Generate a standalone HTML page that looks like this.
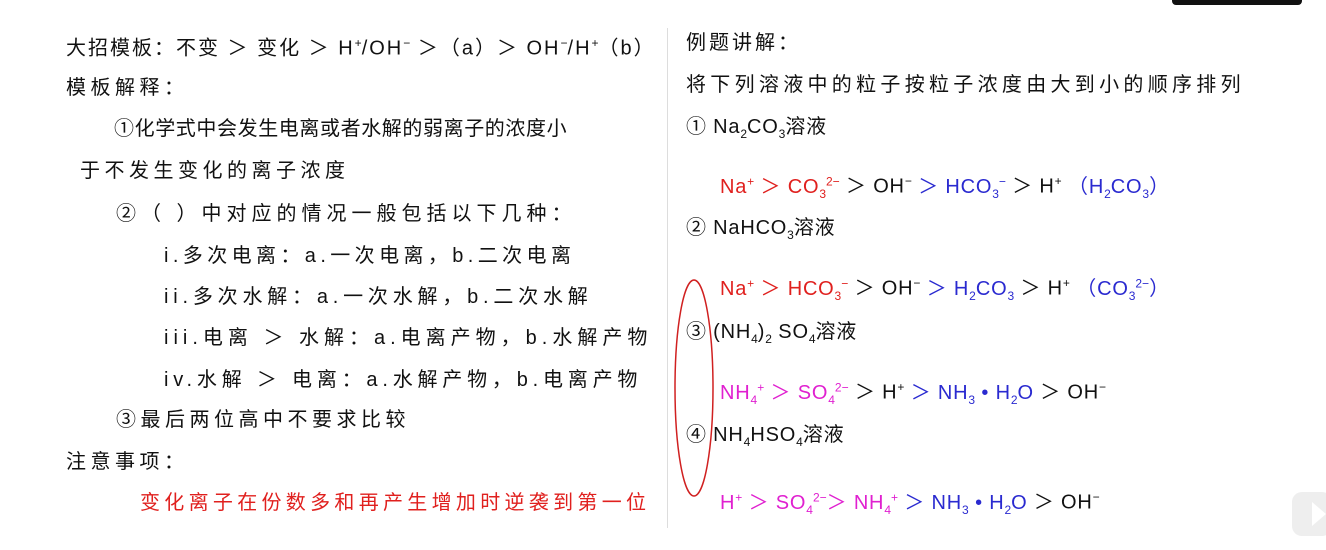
<!DOCTYPE html><html><head><meta charset="utf-8"><style>
body{margin:0;width:1326px;height:550px;background:#fff;position:relative;overflow:hidden;font-family:"Liberation Sans","Noto Sans CJK SC",sans-serif;font-size:20px;color:#111}
.t{position:absolute;white-space:nowrap;line-height:24px;letter-spacing:4.5px}
.f{letter-spacing:0.8px}
.r{color:#e0201e}.b{color:#2a2ad0}.m{color:#e020d0}
sub,sup{font-size:12px;letter-spacing:0}
</style></head><body>
<div style="position:absolute;left:667px;top:28px;width:1px;height:500px;background:#ddd"></div>
<div style="position:absolute;left:1172px;top:0;width:130px;height:5px;background:#111;border-radius:0 0 4px 4px"></div>
<div class="t" style="left:66px;top:31px;letter-spacing:2px">大招模板：不变 ＞ 变化 ＞ H<sup>+</sup>/OH<sup>−</sup> ＞（a）＞ OH<sup>−</sup>/H<sup>+</sup>（b）</div>
<div class="t" style="left:66px;top:76px">模板解释：</div>
<div class="t" style="left:114px;top:117px;letter-spacing:0.6px">①化学式中会发生电离或者水解的弱离子的浓度小</div>
<div class="t" style="left:80px;top:159px">于不发生变化的离子浓度</div>
<div class="t" style="left:116px;top:202px;letter-spacing:5px">②（ ）中对应的情况一般包括以下几种：</div>
<div class="t" style="left:164px;top:244px;letter-spacing:4.4px">i.多次电离：a.一次电离，b.二次电离</div>
<div class="t" style="left:164px;top:285px;letter-spacing:4.8px">ii.多次水解：a.一次水解，b.二次水解</div>
<div class="t" style="left:164px;top:326px;letter-spacing:5px">iii.电离 ＞ 水解：a.电离产物，b.水解产物</div>
<div class="t" style="left:164px;top:368px;letter-spacing:4.8px">iv.水解 ＞ 电离：a.水解产物，b.电离产物</div>
<div class="t" style="left:116px;top:408px">③最后两位高中不要求比较</div>
<div class="t" style="left:66px;top:450px">注意事项：</div>
<div class="t r" style="left:140px;top:491px;letter-spacing:4.3px">变化离子在份数多和再产生增加时逆袭到第一位</div>

<div class="t" style="left:686px;top:31px;letter-spacing:3px">例题讲解：</div>
<div class="t" style="left:686px;top:73px;letter-spacing:4.3px">将下列溶液中的粒子按粒子浓度由大到小的顺序排列</div>
<div class="t f" style="left:686px;top:115px">① Na<sub>2</sub>CO<sub>3</sub>溶液</div>
<div class="t f" style="left:720px;top:169px"><span class="r">Na<sup>+</sup> ＞ CO<sub>3</sub><sup>2−</sup></span> ＞ OH<sup>−</sup> <span class="b">＞ HCO<sub>3</sub><sup>−</sup></span> ＞ H<sup>+</sup> <span class="b">（H<sub>2</sub>CO<sub>3</sub>）</span></div>
<div class="t f" style="left:686px;top:216px">② NaHCO<sub>3</sub>溶液</div>
<div class="t f" style="left:720px;top:271px"><span class="r">Na<sup>+</sup> ＞ HCO<sub>3</sub><sup>−</sup></span> ＞ OH<sup>−</sup> <span class="b">＞ H<sub>2</sub>CO<sub>3</sub></span> ＞ H<sup>+</sup> <span class="b">（CO<sub>3</sub><sup>2−</sup>）</span></div>
<div class="t f" style="left:686px;top:320px">③ (NH<sub>4</sub>)<sub>2</sub> SO<sub>4</sub>溶液</div>
<div class="t f" style="left:720px;top:375px"><span class="m">NH<sub>4</sub><sup>+</sup> ＞ SO<sub>4</sub><sup>2−</sup></span> ＞ H<sup>+</sup> <span class="b">＞ NH<sub>3</sub> • H<sub>2</sub>O</span> ＞ OH<sup>−</sup></div>
<div class="t f" style="left:686px;top:423px">④ NH<sub>4</sub>HSO<sub>4</sub>溶液</div>
<div class="t f" style="left:720px;top:485px"><span class="m">H<sup>+</sup> ＞ SO<sub>4</sub><sup>2−</sup>＞ NH<sub>4</sub><sup>+</sup></span> <span class="b">＞ NH<sub>3</sub> • H<sub>2</sub>O</span> ＞ OH<sup>−</sup></div>
<svg style="position:absolute;left:0;top:0" width="1326" height="550"><ellipse cx="694" cy="388" rx="19" ry="108" fill="none" stroke="#d02020" stroke-width="1.5"/>
<rect x="1292" y="492" width="40" height="44" rx="10" fill="#eee"/><path d="M1312 502 L1326 514 L1312 526Z" fill="#fff"/></svg>
</body></html>
